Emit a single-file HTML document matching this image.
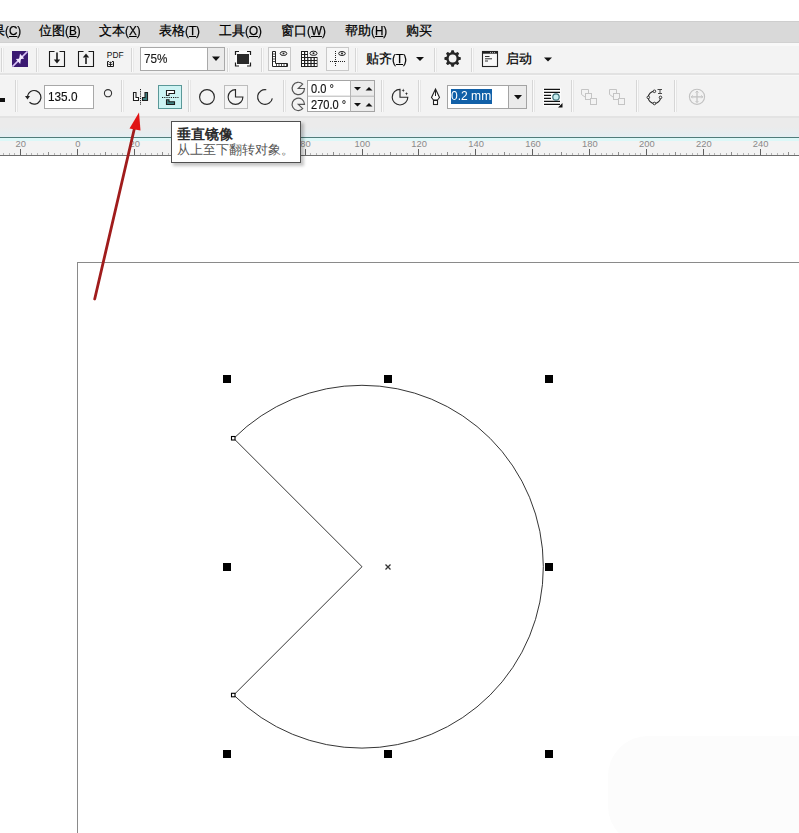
<!DOCTYPE html>
<html><head><meta charset="utf-8">
<style>
*{margin:0;padding:0;box-sizing:border-box}
html,body{width:799px;height:833px;overflow:hidden;background:#fff;font-family:"Liberation Sans",sans-serif;color:#222}
.a{position:absolute}
.sep{position:absolute;width:1px;background:#dadada;border-right:1px solid #fbfbfb;width:2px}
.menu{position:absolute;top:23px;font-size:13px;color:#000;-webkit-text-stroke:0.25px #000;white-space:nowrap;line-height:16px}
.p{display:inline-block;transform:scaleX(0.9);transform-origin:0 50%;margin-right:-1.7px}
.menu u{text-decoration:underline;text-underline-offset:1px}
</style></head><body>
<!-- top white strip -->
<div class="a" style="left:0;top:0;width:799px;height:21px;background:#fff"></div>
<!-- menu bar -->
<div class="a" style="left:0;top:21px;width:799px;height:22px;background:#d9d9d9;border-top:1px solid #cecece;border-bottom:1px solid #d1d1d1"></div>
<div class="a" style="left:0;top:43px;width:799px;height:3px;background:#f8f8f8"></div>
<!-- toolbar 1 -->
<div class="a" style="left:0;top:46px;width:799px;height:28px;background:#f3f3f3"></div>
<div class="a" style="left:0;top:73px;width:799px;height:2px;background:#e2e2e2"></div>
<!-- toolbar 2 -->
<div class="a" style="left:0;top:75px;width:799px;height:42px;background:#f3f3f3;border-top:1px solid #f7f7f7"></div>
<div class="a" style="left:0;top:116px;width:799px;height:2px;background:#e3e3e3"></div>
<!-- band -->
<div class="a" style="left:0;top:118px;width:799px;height:19px;background:linear-gradient(#ebebeb 0%,#ebebeb 45%,#e4eef2 100%)"></div>
<div class="a" style="left:0;top:137px;width:799px;height:1px;background:#4e7c7a"></div>
<!-- ruler -->
<div class="a" style="left:0;top:138px;width:799px;height:17px;background:#f3f3f3"></div>
<div class="a" style="left:0;top:138px;width:799px;height:3px;background:#dcf8f8"></div>
<div class="a" style="left:0;top:155px;width:799px;height:1px;background:#6e6e6e"></div>


<!-- menu items -->
<div class="menu" style="left:-8px">果<span class="p">(<u>C</u>)</span></div>
<div class="menu" style="left:39px">位图<span class="p">(<u>B</u>)</span></div>
<div class="menu" style="left:99px">文本<span class="p">(<u>X</u>)</span></div>
<div class="menu" style="left:159px">表格<span class="p">(<u>T</u>)</span></div>
<div class="menu" style="left:219px">工具<span class="p">(<u>O</u>)</span></div>
<div class="menu" style="left:281px">窗口<span class="p">(<u>W</u>)</span></div>
<div class="menu" style="left:345px">帮助<span class="p">(<u>H</u>)</span></div>
<div class="menu" style="left:406px">购买</div>


<!-- toolbar1 -->
<svg class="a" style="left:0;top:0" width="799" height="76">
  <g><rect x="1" y="48" width="1" height="24" fill="#d6d6d6"/><rect x="2" y="48" width="1" height="24" fill="#fafafa"/><rect x="3" y="48" width="1" height="24" fill="#e9e9e9"/><rect x="36" y="48" width="1" height="24" fill="#d6d6d6"/><rect x="37" y="48" width="1" height="24" fill="#fafafa"/><rect x="38" y="48" width="1" height="24" fill="#e9e9e9"/><rect x="131" y="48" width="1" height="24" fill="#d6d6d6"/><rect x="132" y="48" width="1" height="24" fill="#fafafa"/><rect x="133" y="48" width="1" height="24" fill="#e9e9e9"/><rect x="227" y="48" width="1" height="24" fill="#d6d6d6"/><rect x="228" y="48" width="1" height="24" fill="#fafafa"/><rect x="229" y="48" width="1" height="24" fill="#e9e9e9"/><rect x="261" y="48" width="1" height="24" fill="#d6d6d6"/><rect x="262" y="48" width="1" height="24" fill="#fafafa"/><rect x="263" y="48" width="1" height="24" fill="#e9e9e9"/><rect x="355" y="48" width="1" height="24" fill="#d6d6d6"/><rect x="356" y="48" width="1" height="24" fill="#fafafa"/><rect x="357" y="48" width="1" height="24" fill="#e9e9e9"/><rect x="434" y="48" width="1" height="24" fill="#d6d6d6"/><rect x="435" y="48" width="1" height="24" fill="#fafafa"/><rect x="436" y="48" width="1" height="24" fill="#e9e9e9"/><rect x="471" y="48" width="1" height="24" fill="#d6d6d6"/><rect x="472" y="48" width="1" height="24" fill="#fafafa"/><rect x="473" y="48" width="1" height="24" fill="#e9e9e9"/></g>
  <!-- purple -->
  <rect x="12" y="51" width="16" height="16" fill="#3b1a72"/>
  <path d="M27.6 51.4 L12.4 66.6" stroke="#dcc4fa" stroke-width="1.5"/>
  <path d="M20 53.8 L24.2 58.6 L19 59.6 Z" fill="#f2e8ff"/>
  <path d="M15.8 59 L20.2 63.9 L21 58.4 Z" fill="#f2e8ff"/>
  <!-- import -->
  <path d="M54.5 51.5 H49.5 V66.5 H64.5 V51.5 H59.5" fill="none" stroke="#1a1a1a" stroke-width="1.1"/>
  <path d="M57 52.5 V60" stroke="#1a1a1a" stroke-width="1.6"/>
  <path d="M53.8 59.5 H60.2 L57 63.5 Z" fill="#1a1a1a"/>
  <!-- export -->
  <path d="M83.5 51.5 H78.5 V66.5 H93.5 V51.5 H88.5" fill="none" stroke="#1a1a1a" stroke-width="1.1"/>
  <path d="M86 57.5 V64" stroke="#1a1a1a" stroke-width="1.6"/>
  <path d="M82.8 57.5 H89.2 L86 53.5 Z" fill="#1a1a1a"/>
  <!-- pdf -->
  <text x="106.8" y="58" font-family="Liberation Sans" font-size="8.4" fill="#111">PDF</text>
  <path d="M107.5 61.5 V66.5 H113.5 V61.5 M107.5 61.5 H109 M112 61.5 H113.5" fill="none" stroke="#1a1a1a" stroke-width="1"/>
  <path d="M108.5 64.5 H112.5 M110.5 62 V66 M109 63.3 L110.5 61.8 L112 63.3" fill="none" stroke="#1a1a1a" stroke-width="0.9"/>
  <!-- zoom combo -->
  <rect x="140.5" y="47.5" width="84" height="23" fill="#fff" stroke="#a9a9a9"/>
  <rect x="207.5" y="47.5" width="17" height="23" fill="#ebebeb" stroke="#a9a9a9"/>
  <path d="M212 56.5 H220 L216 61 Z" fill="#111"/>
  
  <!-- zoom page -->
  <rect x="235" y="51" width="16" height="16" fill="#fbfbfb"/>
  <rect x="237" y="54" width="12" height="10" fill="#2a2a2a"/>
  <path d="M235.5 55 V51.5 H239 M247 51.5 H250.5 V55 M250.5 62.5 V66 H247 M239 66 H235.5 V62.5" fill="none" stroke="#1e1e1e" stroke-width="1.2"/>
  <!-- ruler toggle -->
  <rect x="268.5" y="47.5" width="22" height="23" fill="#f7f7f7" stroke="#c9c9c9"/>
  <path d="M272.5 51.5 H275.5 V63.5 H287.5 V66.5 H272.5 Z" fill="#fff" stroke="#222" stroke-width="1"/>
  <path d="M273 54 H275 M273 56.5 H275 M273 59 H275 M273 61.5 H275 M276.5 64 V66 M279 64 V66 M281.5 64 V66 M284 64 V66 M286.5 64 V66" stroke="#222" stroke-width="0.8"/>
  <ellipse cx="283.5" cy="53.5" rx="3.3" ry="2" fill="none" stroke="#222" stroke-width="1"/>
  <circle cx="283.5" cy="53.5" r="1" fill="#222"/>
  <!-- grid -->
  <path d="M301 51 H308 V57 H317.5 V67 H301 Z" fill="#1e1e1e"/>
  <g fill="#fff"><rect x="302.0" y="52.0" width="2" height="2"/><rect x="305.2" y="52.0" width="2" height="2"/><rect x="302.0" y="55.0" width="2" height="2"/><rect x="305.2" y="55.0" width="2" height="2"/><rect x="302.0" y="58.0" width="2" height="2"/><rect x="305.2" y="58.0" width="2" height="2"/><rect x="308.4" y="58.0" width="2" height="2"/><rect x="311.6" y="58.0" width="2" height="2"/><rect x="314.8" y="58.0" width="2" height="2"/><rect x="302.0" y="61.0" width="2" height="2"/><rect x="305.2" y="61.0" width="2" height="2"/><rect x="308.4" y="61.0" width="2" height="2"/><rect x="311.6" y="61.0" width="2" height="2"/><rect x="314.8" y="61.0" width="2" height="2"/><rect x="302.0" y="64.0" width="2" height="2"/><rect x="305.2" y="64.0" width="2" height="2"/><rect x="308.4" y="64.0" width="2" height="2"/><rect x="311.6" y="64.0" width="2" height="2"/><rect x="314.8" y="64.0" width="2" height="2"/></g>
  <ellipse cx="313.5" cy="53.3" rx="3.6" ry="2.1" fill="#f3f3f3" stroke="#222" stroke-width="1"/>
  <circle cx="313.5" cy="53.3" r="1" fill="#222"/>
  <!-- guidelines toggle -->
  <rect x="326.5" y="47.5" width="22" height="23" fill="#f7f7f7" stroke="#c9c9c9"/>
  <path d="M335.5 51 V67 M330 61.5 H346" stroke="#222" stroke-width="1" stroke-dasharray="1 1"/>
  <ellipse cx="342" cy="53.5" rx="3.3" ry="2" fill="none" stroke="#222" stroke-width="1"/>
  <circle cx="342" cy="53.5" r="1" fill="#222"/>
  <!-- snap arrow -->
  <path d="M416 57 H424 L420 61 Z" fill="#111"/>
  <!-- gear -->
  <g transform="translate(452.6 58.5)">
    <circle r="6.4" fill="#262626"/>
    <g fill="#262626">
      <rect x="-1.5" y="-8.2" width="3" height="16.4" rx="0.8"/>
      <rect x="-1.5" y="-8.2" width="3" height="16.4" rx="0.8" transform="rotate(45)"/>
      <rect x="-1.5" y="-8.2" width="3" height="16.4" rx="0.8" transform="rotate(90)"/>
      <rect x="-1.5" y="-8.2" width="3" height="16.4" rx="0.8" transform="rotate(135)"/>
    </g>
    <circle r="3.9" fill="#f3f3f3"/>
  </g>
  <!-- window icon -->
  <rect x="482.5" y="51.5" width="15" height="15" fill="#f8f8f8" stroke="#222" stroke-width="1.1"/>
  <rect x="482.5" y="51.5" width="15" height="2.2" fill="#222"/>
  <path d="M490 52.6 H491 M492 52.6 H493 M494 52.6 H495" stroke="#ddd" stroke-width="0.8"/>
  <path d="M485 56.5 H489.5 M485 58.8 H492 M485 61 H488" stroke="#333" stroke-width="1"/>
  <!-- startup arrow -->
  <path d="M544 57.5 H552 L548 61.5 Z" fill="#111"/>
</svg>
<div class="menu" style="left:366px;top:51px">贴齐<span class="p">(<u>T</u>)</span></div>
<div class="menu" style="left:506px;top:51px">启动</div>


<!-- toolbar2 -->
<svg class="a" style="left:0;top:76px" width="799" height="42" viewBox="0 76 799 42">
  <rect x="15" y="80" width="1" height="32" fill="#d6d6d6"/><rect x="16" y="80" width="1" height="32" fill="#fafafa"/><rect x="17" y="80" width="1" height="32" fill="#e6e6e6"/><rect x="121" y="80" width="1" height="32" fill="#d6d6d6"/><rect x="122" y="80" width="1" height="32" fill="#fafafa"/><rect x="123" y="80" width="1" height="32" fill="#e6e6e6"/><rect x="188" y="80" width="1" height="32" fill="#d6d6d6"/><rect x="189" y="80" width="1" height="32" fill="#fafafa"/><rect x="190" y="80" width="1" height="32" fill="#e6e6e6"/><rect x="283" y="80" width="1" height="32" fill="#d6d6d6"/><rect x="284" y="80" width="1" height="32" fill="#fafafa"/><rect x="285" y="80" width="1" height="32" fill="#e6e6e6"/><rect x="381" y="80" width="1" height="32" fill="#d6d6d6"/><rect x="382" y="80" width="1" height="32" fill="#fafafa"/><rect x="383" y="80" width="1" height="32" fill="#e6e6e6"/><rect x="418" y="80" width="1" height="32" fill="#d6d6d6"/><rect x="419" y="80" width="1" height="32" fill="#fafafa"/><rect x="420" y="80" width="1" height="32" fill="#e6e6e6"/><rect x="532" y="80" width="1" height="32" fill="#d6d6d6"/><rect x="533" y="80" width="1" height="32" fill="#fafafa"/><rect x="534" y="80" width="1" height="32" fill="#e6e6e6"/><rect x="571" y="80" width="1" height="32" fill="#d6d6d6"/><rect x="572" y="80" width="1" height="32" fill="#fafafa"/><rect x="573" y="80" width="1" height="32" fill="#e6e6e6"/><rect x="636" y="80" width="1" height="32" fill="#d6d6d6"/><rect x="637" y="80" width="1" height="32" fill="#fafafa"/><rect x="638" y="80" width="1" height="32" fill="#e6e6e6"/><rect x="674" y="80" width="1" height="32" fill="#d6d6d6"/><rect x="675" y="80" width="1" height="32" fill="#fafafa"/><rect x="676" y="80" width="1" height="32" fill="#e6e6e6"/>
  <rect x="0" y="98" width="5" height="4" fill="#111"/>
  <!-- rotate -->
  <path d="M27.4 96.5 A6.8 6.8 0 1 1 29.5 102.3" fill="none" stroke="#222" stroke-width="1.2"/>
  <path d="M25 96 L30 96 L27.5 99.5 Z" fill="#222"/>
  <rect x="44.5" y="85.5" width="49" height="23" fill="#fff" stroke="#a8a8a8"/>
  <circle cx="108" cy="93.2" r="3.6" fill="none" stroke="#333" stroke-width="1.1"/>
  <!-- mirror h -->
  <path d="M133.5 92.5 H136 V97.5 H138.5 V100.5 H133.5 Z" fill="#fff" stroke="#1e1e1e" stroke-width="1.1"/>
  <path d="M147.5 92.5 H145 V97.5 H142.5 V100.5 H147.5 Z" fill="#3e8080" stroke="#1e1e1e" stroke-width="1.1"/>
  <path d="M140.5 89 V105" stroke="#1e1e1e" stroke-width="1" stroke-dasharray="1.2 1"/>
  <!-- mirror v button -->
  <rect x="158.5" y="85.5" width="23" height="23" fill="#cdf3f3" stroke="#5a9898"/>
  <path d="M166.5 90.5 H174.5 V93.5 H169 V95.5 H166.5 Z" fill="#fff" stroke="#1e1e1e" stroke-width="1.1"/>
  <path d="M162 97.5 H178.5" stroke="#1e1e1e" stroke-width="1" stroke-dasharray="1.2 1"/>
  <path d="M166.5 99.8 H169 V101.8 H174.5 V104.5 H166.5 Z" fill="#3e8080" stroke="#1e1e1e" stroke-width="1.1"/>
  <!-- ellipse -->
  <circle cx="207" cy="97" r="7.4" fill="none" stroke="#2a2a2a" stroke-width="1.15"/>
  <rect x="224.5" y="85.5" width="23" height="23" fill="#f5f5f5" stroke="#bdbdbd"/>
  <path d="M235.5 97 V89.6 A7.4 7.4 0 1 0 242.9 97 Z" fill="none" stroke="#2a2a2a" stroke-width="1.15"/>
  <path d="M266.3 89.7 A7.4 7.4 0 1 0 272.3 98.3" fill="none" stroke="#2a2a2a" stroke-width="1.15"/>
  <!-- angle icons -->
  <path d="M298.3 88.5 L302.7 84.1 A6.2 6.2 0 1 0 304.5 88.5 Z" fill="none" stroke="#555" stroke-width="1.2"/>
  <path d="M298.3 104.3 L304.5 104.3 A6.2 6.2 0 1 0 302.7 108.7 Z" fill="none" stroke="#555" stroke-width="1.2"/>
  <rect x="307.5" y="80.5" width="67" height="31" fill="#fff" stroke="#a4a4a4"/>
  <rect x="351" y="81" width="23" height="30" fill="#ececec"/>
  <path d="M307.5 96.2 H374.5 M350.5 80.5 V111.5" stroke="#b4b4b4" stroke-width="1"/>
  <path d="M354 87 H361 L357.5 90.5 Z M365.5 90.5 H372.5 L369 87 Z" fill="#111"/>
  <path d="M354 103 H361 L357.5 106.5 Z M365.5 106.5 H372.5 L369 103 Z" fill="#111"/>
  <!-- pie star -->
  <path d="M400 97.2 V89.4 A7.8 7.8 0 1 0 407.8 97.2 Z" fill="none" stroke="#2a2a2a" stroke-width="1.15"/>
  <path d="M403.2 88.5 L403.7 90 L405 90.3 L403.7 90.8 L403.2 92.2 L402.7 90.8 L401.4 90.3 L402.7 90 Z M406.5 92 L407 93.3 L408.2 93.7 L407 94.1 L406.5 95.4 L406 94.1 L404.8 93.7 L406 93.3 Z" fill="#2a2a2a"/>
  <!-- pen -->
  <path d="M435.5 89 L439.5 97.5 L437.5 100 H433.5 L431.5 97.5 Z" fill="#fff" stroke="#222" stroke-width="1.1"/>
  <path d="M435.5 90 V96" stroke="#222" stroke-width="1"/>
  <rect x="433.5" y="100.5" width="4" height="4" fill="#fff" stroke="#222" stroke-width="1.1"/>
  <!-- outline width combo -->
  <rect x="447.5" y="85.5" width="79" height="23" fill="#fff" stroke="#a4a4a4"/>
  <rect x="508.5" y="85.5" width="18" height="23" fill="#ebebeb" stroke="#a4a4a4"/>
  <path d="M514 95 H522 L518 99.5 Z" fill="#111"/>
  <rect x="451" y="89" width="41" height="15" fill="#1160a8"/>
  <!-- wrap -->
  <rect x="543" y="87.5" width="18" height="19" fill="#fcfcfc"/>
  <path d="M544 89.3 H560 M544 92.4 H560 M544 95.4 H551 M544 98.4 H551 M544 101.4 H560 M544 104.4 H560" stroke="#111" stroke-width="1.2"/>
  <circle cx="556" cy="97" r="3.2" fill="#c8eef0" stroke="#3b6f78" stroke-width="1.2"/>
  <path d="M562.5 103 V107.5 H558 Z" fill="#111"/>
  <!-- disabled combine -->
  <g fill="#f3f3f3" stroke="#c4c4c4" stroke-width="1">
    <path d="M581.5 89.5 H588.5 V94.5 L585 97 L581.5 94.5 Z"/>
    <rect x="585.5" y="93.5" width="6" height="6"/>
    <rect x="590.5" y="98.5" width="6" height="6"/>
    <path d="M609.5 89.5 H616.5 V94.5 L613 97 L609.5 94.5 Z"/>
    <rect x="613.5" y="93.5" width="6" height="6"/>
    <rect x="618.5" y="98.5" width="6" height="6"/>
  </g>
  <!-- convert to curves -->
  <path d="M654.4 91.3 A6.1 6.1 0 1 0 660.5 97.4" fill="none" stroke="#222" stroke-width="1.1"/>
  <g fill="#f3f3f3" stroke="#222" stroke-width="0.9">
    <circle cx="654.4" cy="91.3" r="1.3"/>
    <circle cx="660.5" cy="97.4" r="1.3"/>
    <circle cx="654.4" cy="103.5" r="1.3"/>
    <circle cx="648.3" cy="97.4" r="1.3"/>
  </g>
  <path d="M657.5 89.5 H662 M660 90 V93 M658 93.5 H662" stroke="#333" stroke-width="0.9"/>
  
  <!-- disabled plus circle -->
  <circle cx="697" cy="96.8" r="7.6" fill="none" stroke="#c2c2c2" stroke-width="1.1"/>
  <path d="M697 91 V102.6 M691.2 96.8 H702.8" stroke="#c2c2c2" stroke-width="1.2"/>
  <path d="M695.5 92.5 L697 91 L698.5 92.5 M695.5 101 L697 102.5 L698.5 101 M692.7 95.3 L691.2 96.8 L692.7 98.3 M701.3 95.3 L702.8 96.8 L701.3 98.3" fill="none" stroke="#c2c2c2" stroke-width="0.9"/>
</svg>
<div class="a" style="left:144px;top:51px;font-size:13.3px;color:#1a1a1a;-webkit-text-stroke:0.15px #111;line-height:16px;transform:scaleX(0.88);transform-origin:0 0">75%</div>
<div class="a" style="left:48px;top:89px;font-size:13.1px;color:#111;-webkit-text-stroke:0.15px #111;line-height:16px;transform:scaleX(0.9);transform-origin:0 0">135.0</div>
<div class="a" style="left:311px;top:81px;font-size:12.3px;color:#111;-webkit-text-stroke:0.15px #111;line-height:16px;transform:scaleX(0.9);transform-origin:0 0">0.0 °</div>
<div class="a" style="left:311px;top:97px;font-size:12.3px;color:#111;-webkit-text-stroke:0.15px #111;line-height:16px;transform:scaleX(0.9);transform-origin:0 0">270.0 °</div>
<div class="a" style="left:451px;top:88px;font-size:13.1px;color:#fff;line-height:16px;transform:scaleX(0.92);transform-origin:0 0">0.2 mm</div>

<svg class="a" style="left:0;top:0" width="799" height="160"><rect x="3" y="153" width="1" height="2" fill="#b4b4b4"/><rect x="9" y="153" width="1" height="2" fill="#b4b4b4"/><rect x="14" y="153" width="1" height="2" fill="#b4b4b4"/><rect x="20" y="149" width="1" height="6" fill="#606060"/><rect x="26" y="153" width="1" height="2" fill="#b4b4b4"/><rect x="31" y="153" width="1" height="2" fill="#b4b4b4"/><rect x="37" y="153" width="1" height="2" fill="#b4b4b4"/><rect x="43" y="153" width="1" height="2" fill="#b4b4b4"/><rect x="48" y="152" width="1" height="3" fill="#8c8c8c"/><rect x="54" y="153" width="1" height="2" fill="#b4b4b4"/><rect x="60" y="153" width="1" height="2" fill="#b4b4b4"/><rect x="66" y="153" width="1" height="2" fill="#b4b4b4"/><rect x="71" y="153" width="1" height="2" fill="#b4b4b4"/><rect x="77" y="149" width="1" height="6" fill="#606060"/><rect x="83" y="153" width="1" height="2" fill="#b4b4b4"/><rect x="88" y="153" width="1" height="2" fill="#b4b4b4"/><rect x="94" y="153" width="1" height="2" fill="#b4b4b4"/><rect x="100" y="153" width="1" height="2" fill="#b4b4b4"/><rect x="105" y="152" width="1" height="3" fill="#8c8c8c"/><rect x="111" y="153" width="1" height="2" fill="#b4b4b4"/><rect x="117" y="153" width="1" height="2" fill="#b4b4b4"/><rect x="122" y="153" width="1" height="2" fill="#b4b4b4"/><rect x="128" y="153" width="1" height="2" fill="#b4b4b4"/><rect x="134" y="149" width="1" height="6" fill="#606060"/><rect x="140" y="153" width="1" height="2" fill="#b4b4b4"/><rect x="145" y="153" width="1" height="2" fill="#b4b4b4"/><rect x="151" y="153" width="1" height="2" fill="#b4b4b4"/><rect x="157" y="153" width="1" height="2" fill="#b4b4b4"/><rect x="162" y="152" width="1" height="3" fill="#8c8c8c"/><rect x="168" y="153" width="1" height="2" fill="#b4b4b4"/><rect x="174" y="153" width="1" height="2" fill="#b4b4b4"/><rect x="179" y="153" width="1" height="2" fill="#b4b4b4"/><rect x="185" y="153" width="1" height="2" fill="#b4b4b4"/><rect x="191" y="149" width="1" height="6" fill="#606060"/><rect x="196" y="153" width="1" height="2" fill="#b4b4b4"/><rect x="202" y="153" width="1" height="2" fill="#b4b4b4"/><rect x="208" y="153" width="1" height="2" fill="#b4b4b4"/><rect x="214" y="153" width="1" height="2" fill="#b4b4b4"/><rect x="219" y="152" width="1" height="3" fill="#8c8c8c"/><rect x="225" y="153" width="1" height="2" fill="#b4b4b4"/><rect x="231" y="153" width="1" height="2" fill="#b4b4b4"/><rect x="236" y="153" width="1" height="2" fill="#b4b4b4"/><rect x="242" y="153" width="1" height="2" fill="#b4b4b4"/><rect x="248" y="149" width="1" height="6" fill="#606060"/><rect x="253" y="153" width="1" height="2" fill="#b4b4b4"/><rect x="259" y="153" width="1" height="2" fill="#b4b4b4"/><rect x="265" y="153" width="1" height="2" fill="#b4b4b4"/><rect x="270" y="153" width="1" height="2" fill="#b4b4b4"/><rect x="276" y="152" width="1" height="3" fill="#8c8c8c"/><rect x="282" y="153" width="1" height="2" fill="#b4b4b4"/><rect x="288" y="153" width="1" height="2" fill="#b4b4b4"/><rect x="293" y="153" width="1" height="2" fill="#b4b4b4"/><rect x="299" y="153" width="1" height="2" fill="#b4b4b4"/><rect x="305" y="149" width="1" height="6" fill="#606060"/><rect x="310" y="153" width="1" height="2" fill="#b4b4b4"/><rect x="316" y="153" width="1" height="2" fill="#b4b4b4"/><rect x="322" y="153" width="1" height="2" fill="#b4b4b4"/><rect x="327" y="153" width="1" height="2" fill="#b4b4b4"/><rect x="333" y="152" width="1" height="3" fill="#8c8c8c"/><rect x="339" y="153" width="1" height="2" fill="#b4b4b4"/><rect x="344" y="153" width="1" height="2" fill="#b4b4b4"/><rect x="350" y="153" width="1" height="2" fill="#b4b4b4"/><rect x="356" y="153" width="1" height="2" fill="#b4b4b4"/><rect x="362" y="149" width="1" height="6" fill="#606060"/><rect x="367" y="153" width="1" height="2" fill="#b4b4b4"/><rect x="373" y="153" width="1" height="2" fill="#b4b4b4"/><rect x="379" y="153" width="1" height="2" fill="#b4b4b4"/><rect x="384" y="153" width="1" height="2" fill="#b4b4b4"/><rect x="390" y="152" width="1" height="3" fill="#8c8c8c"/><rect x="396" y="153" width="1" height="2" fill="#b4b4b4"/><rect x="401" y="153" width="1" height="2" fill="#b4b4b4"/><rect x="407" y="153" width="1" height="2" fill="#b4b4b4"/><rect x="413" y="153" width="1" height="2" fill="#b4b4b4"/><rect x="418" y="149" width="1" height="6" fill="#606060"/><rect x="424" y="153" width="1" height="2" fill="#b4b4b4"/><rect x="430" y="153" width="1" height="2" fill="#b4b4b4"/><rect x="435" y="153" width="1" height="2" fill="#b4b4b4"/><rect x="441" y="153" width="1" height="2" fill="#b4b4b4"/><rect x="447" y="152" width="1" height="3" fill="#8c8c8c"/><rect x="453" y="153" width="1" height="2" fill="#b4b4b4"/><rect x="458" y="153" width="1" height="2" fill="#b4b4b4"/><rect x="464" y="153" width="1" height="2" fill="#b4b4b4"/><rect x="470" y="153" width="1" height="2" fill="#b4b4b4"/><rect x="475" y="149" width="1" height="6" fill="#606060"/><rect x="481" y="153" width="1" height="2" fill="#b4b4b4"/><rect x="487" y="153" width="1" height="2" fill="#b4b4b4"/><rect x="492" y="153" width="1" height="2" fill="#b4b4b4"/><rect x="498" y="153" width="1" height="2" fill="#b4b4b4"/><rect x="504" y="152" width="1" height="3" fill="#8c8c8c"/><rect x="509" y="153" width="1" height="2" fill="#b4b4b4"/><rect x="515" y="153" width="1" height="2" fill="#b4b4b4"/><rect x="521" y="153" width="1" height="2" fill="#b4b4b4"/><rect x="527" y="153" width="1" height="2" fill="#b4b4b4"/><rect x="532" y="149" width="1" height="6" fill="#606060"/><rect x="538" y="153" width="1" height="2" fill="#b4b4b4"/><rect x="544" y="153" width="1" height="2" fill="#b4b4b4"/><rect x="549" y="153" width="1" height="2" fill="#b4b4b4"/><rect x="555" y="153" width="1" height="2" fill="#b4b4b4"/><rect x="561" y="152" width="1" height="3" fill="#8c8c8c"/><rect x="566" y="153" width="1" height="2" fill="#b4b4b4"/><rect x="572" y="153" width="1" height="2" fill="#b4b4b4"/><rect x="578" y="153" width="1" height="2" fill="#b4b4b4"/><rect x="583" y="153" width="1" height="2" fill="#b4b4b4"/><rect x="589" y="149" width="1" height="6" fill="#606060"/><rect x="595" y="153" width="1" height="2" fill="#b4b4b4"/><rect x="601" y="153" width="1" height="2" fill="#b4b4b4"/><rect x="606" y="153" width="1" height="2" fill="#b4b4b4"/><rect x="612" y="153" width="1" height="2" fill="#b4b4b4"/><rect x="618" y="152" width="1" height="3" fill="#8c8c8c"/><rect x="623" y="153" width="1" height="2" fill="#b4b4b4"/><rect x="629" y="153" width="1" height="2" fill="#b4b4b4"/><rect x="635" y="153" width="1" height="2" fill="#b4b4b4"/><rect x="640" y="153" width="1" height="2" fill="#b4b4b4"/><rect x="646" y="149" width="1" height="6" fill="#606060"/><rect x="652" y="153" width="1" height="2" fill="#b4b4b4"/><rect x="657" y="153" width="1" height="2" fill="#b4b4b4"/><rect x="663" y="153" width="1" height="2" fill="#b4b4b4"/><rect x="669" y="153" width="1" height="2" fill="#b4b4b4"/><rect x="675" y="152" width="1" height="3" fill="#8c8c8c"/><rect x="680" y="153" width="1" height="2" fill="#b4b4b4"/><rect x="686" y="153" width="1" height="2" fill="#b4b4b4"/><rect x="692" y="153" width="1" height="2" fill="#b4b4b4"/><rect x="697" y="153" width="1" height="2" fill="#b4b4b4"/><rect x="703" y="149" width="1" height="6" fill="#606060"/><rect x="709" y="153" width="1" height="2" fill="#b4b4b4"/><rect x="714" y="153" width="1" height="2" fill="#b4b4b4"/><rect x="720" y="153" width="1" height="2" fill="#b4b4b4"/><rect x="726" y="153" width="1" height="2" fill="#b4b4b4"/><rect x="731" y="152" width="1" height="3" fill="#8c8c8c"/><rect x="737" y="153" width="1" height="2" fill="#b4b4b4"/><rect x="743" y="153" width="1" height="2" fill="#b4b4b4"/><rect x="748" y="153" width="1" height="2" fill="#b4b4b4"/><rect x="754" y="153" width="1" height="2" fill="#b4b4b4"/><rect x="760" y="149" width="1" height="6" fill="#606060"/><rect x="766" y="153" width="1" height="2" fill="#b4b4b4"/><rect x="771" y="153" width="1" height="2" fill="#b4b4b4"/><rect x="777" y="153" width="1" height="2" fill="#b4b4b4"/><rect x="783" y="153" width="1" height="2" fill="#b4b4b4"/><rect x="788" y="152" width="1" height="3" fill="#8c8c8c"/><rect x="794" y="153" width="1" height="2" fill="#b4b4b4"/><g font-family="Liberation Sans" font-size="9.4" fill="#8a8a8a"><text x="20.8" y="147.3" text-anchor="middle">20</text><text x="77.8" y="147.3" text-anchor="middle">0</text><text x="134.7" y="147.3" text-anchor="middle">20</text><text x="191.6" y="147.3" text-anchor="middle">40</text><text x="248.5" y="147.3" text-anchor="middle">60</text><text x="305.4" y="147.3" text-anchor="middle">80</text><text x="362.3" y="147.3" text-anchor="middle">100</text><text x="419.2" y="147.3" text-anchor="middle">120</text><text x="476.1" y="147.3" text-anchor="middle">140</text><text x="533.0" y="147.3" text-anchor="middle">160</text><text x="589.9" y="147.3" text-anchor="middle">180</text><text x="646.9" y="147.3" text-anchor="middle">200</text><text x="703.8" y="147.3" text-anchor="middle">220</text><text x="760.7" y="147.3" text-anchor="middle">240</text></g></svg>
<!-- page border -->
<div class="a" style="left:77px;top:262px;width:722px;height:1px;background:#8a8a8a"></div>
<div class="a" style="left:77px;top:262px;width:1px;height:571px;background:#8a8a8a"></div>

<div class="a" style="left:608px;top:736px;width:200px;height:110px;background:#fcfcfc;border-radius:40px 0 0 40px"></div>
<!-- pie -->
<svg class="a" style="left:0;top:0" width="799" height="833">
  <path d="M362 566.7 L233.7 438.4 A181.4 181.4 0 1 1 233.7 695 Z" fill="none" stroke="#1e1e1e" stroke-width="0.9"/>
  <rect x="223" y="375" width="8" height="8" fill="#000"/>
  <rect x="384" y="375" width="8" height="8" fill="#000"/>
  <rect x="545" y="375" width="8" height="8" fill="#000"/>
  <rect x="223" y="563" width="8" height="8" fill="#000"/>
  <rect x="545" y="563" width="8" height="8" fill="#000"/>
  <rect x="223" y="750" width="8" height="8" fill="#000"/>
  <rect x="384" y="750" width="8" height="8" fill="#000"/>
  <rect x="545" y="750" width="8" height="8" fill="#000"/>
  <rect x="231.5" y="436.5" width="3.5" height="3.5" fill="#fff" stroke="#000" stroke-width="1.1"/>
  <rect x="231.5" y="693.3" width="3.5" height="3.5" fill="#fff" stroke="#000" stroke-width="1.1"/>
  <path d="M385.5 564.5 L390.5 569.5 M390.5 564.5 L385.5 569.5" stroke="#333" stroke-width="1.3"/>
</svg>

<!-- tooltip -->
<div class="a" style="left:173px;top:123px;width:131px;height:43px;background:rgba(0,0,0,0.22);filter:blur(1.5px)"></div>
<div class="a" style="left:171px;top:121px;width:130px;height:42px;background:#fff;border:1px solid #505050"></div>
<div class="a" style="left:177px;top:126px;font-size:14px;font-weight:bold;color:#2c2c2c;line-height:16px;white-space:nowrap">垂直镜像</div>
<div class="a" style="left:177px;top:142px;font-size:13px;color:#555;line-height:16px;white-space:nowrap">从上至下翻转对象。</div>
<!-- red arrow -->
<svg class="a" style="left:0;top:0" width="799" height="833">
  <path d="M94.7 299 L134.5 128" stroke="#a01c1c" stroke-width="2.8" stroke-linecap="round"/>
  <path d="M139 112.5 L129.5 128.5 L140.5 130.5 Z" fill="#e01414"/>
</svg>
</body></html>
